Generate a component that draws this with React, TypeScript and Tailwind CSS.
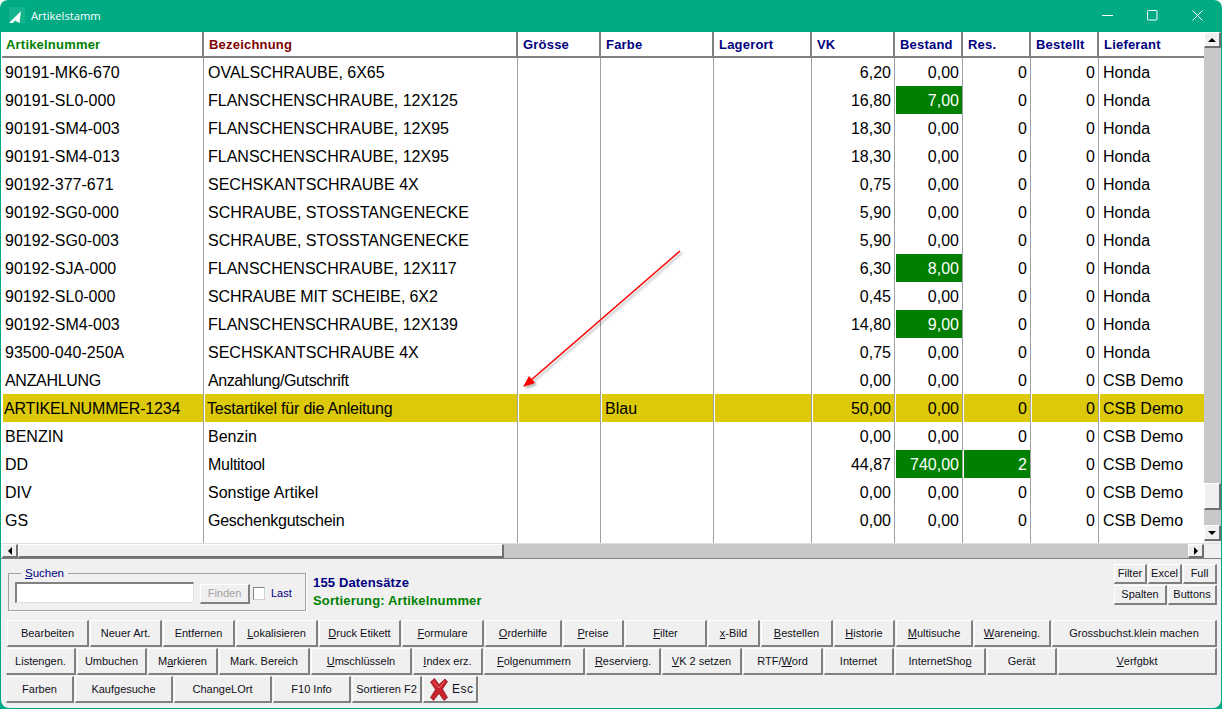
import React from "react";

const ff = "font-['Liberation_Sans',Arial,sans-serif]";

type Row = { a: string; b: string; c?: string; d?: string; vk: string; best: string; res: string; bestellt: string; lief: string; sel?: boolean; g1?: boolean; g2?: boolean; ta?: string; tb?: string };
const rows: Row[] = [
  { a: "90191-MK6-670", b: "OVALSCHRAUBE, 6X65", vk: "6,20", best: "0,00", res: "0", bestellt: "0", lief: "Honda" },
  { a: "90191-SL0-000", b: "FLANSCHENSCHRAUBE, 12X125", vk: "16,80", best: "7,00", res: "0", bestellt: "0", lief: "Honda", g1: true },
  { a: "90191-SM4-003", b: "FLANSCHENSCHRAUBE, 12X95", vk: "18,30", best: "0,00", res: "0", bestellt: "0", lief: "Honda" },
  { a: "90191-SM4-013", b: "FLANSCHENSCHRAUBE, 12X95", vk: "18,30", best: "0,00", res: "0", bestellt: "0", lief: "Honda" },
  { a: "90192-377-671", b: "SECHSKANTSCHRAUBE 4X", vk: "0,75", best: "0,00", res: "0", bestellt: "0", lief: "Honda" },
  { a: "90192-SG0-000", b: "SCHRAUBE, STOSSTANGENECKE", vk: "5,90", best: "0,00", res: "0", bestellt: "0", lief: "Honda" },
  { a: "90192-SG0-003", b: "SCHRAUBE, STOSSTANGENECKE", vk: "5,90", best: "0,00", res: "0", bestellt: "0", lief: "Honda" },
  { a: "90192-SJA-000", b: "FLANSCHENSCHRAUBE, 12X117", vk: "6,30", best: "8,00", res: "0", bestellt: "0", lief: "Honda", g1: true },
  { a: "90192-SL0-000", b: "SCHRAUBE MIT SCHEIBE, 6X2", vk: "0,45", best: "0,00", res: "0", bestellt: "0", lief: "Honda", tb: "tracking-[-0.12px]" },
  { a: "90192-SM4-003", b: "FLANSCHENSCHRAUBE, 12X139", vk: "14,80", best: "9,00", res: "0", bestellt: "0", lief: "Honda", g1: true },
  { a: "93500-040-250A", b: "SECHSKANTSCHRAUBE 4X", vk: "0,75", best: "0,00", res: "0", bestellt: "0", lief: "Honda" },
  { a: "ANZAHLUNG", b: "Anzahlung/Gutschrift", vk: "0,00", best: "0,00", res: "0", bestellt: "0", lief: "CSB Demo", ta: "tracking-[-0.3px]", tb: "tracking-[-0.4px]" },
  { a: "ARTIKELNUMMER-1234", b: "Testartikel für die Anleitung", d: "Blau", vk: "50,00", best: "0,00", res: "0", bestellt: "0", lief: "CSB Demo", sel: true, ta: "tracking-[-0.17px]", tb: "tracking-[-0.2px]" },
  { a: "BENZIN", b: "Benzin", vk: "0,00", best: "0,00", res: "0", bestellt: "0", lief: "CSB Demo" },
  { a: "DD", b: "Multitool", vk: "44,87", best: "740,00", res: "2", bestellt: "0", lief: "CSB Demo", g1: true, g2: true, tb: "tracking-[-0.3px]" },
  { a: "DIV", b: "Sonstige Artikel", vk: "0,00", best: "0,00", res: "0", bestellt: "0", lief: "CSB Demo" },
  { a: "GS", b: "Geschenkgutschein", vk: "0,00", best: "0,00", res: "0", bestellt: "0", lief: "CSB Demo", tb: "tracking-[-0.25px]" },
];

const headers: { t: string; w: string; c: string }[] = [
  { t: "Artikelnummer", w: "w-[202px] pl-1", c: "text-[#008000]" },
  { t: "Bezeichnung", w: "w-[314px] pl-[5px]", c: "text-[#800000]" },
  { t: "Grösse", w: "w-[83px] pl-[5px]", c: "text-[#000080]" },
  { t: "Farbe", w: "w-[113px] pl-[5px]", c: "text-[#000080]" },
  { t: "Lagerort", w: "w-[98px] pl-[5px]", c: "text-[#000080]" },
  { t: "VK", w: "w-[83px] pl-[5px]", c: "text-[#000080]" },
  { t: "Bestand", w: "w-[68px] pl-[5px]", c: "text-[#000080]" },
  { t: "Res.", w: "w-[68px] pl-[5px]", c: "text-[#000080]" },
  { t: "Bestellt", w: "w-[68px] pl-[5px]", c: "text-[#000080]" },
  { t: "Lieferant", w: "w-[105px] pl-[5px]", c: "text-[#000080]" },
];

function Cell({ w, right, pad, bg, color, children, last, track }: { w: string; right?: boolean; pad?: string; bg?: string; color?: string; children?: React.ReactNode; last?: boolean; track?: string }) {
  return (
    <div className={`${w} h-full shrink-0 pl-px ${last ? "" : "border-r border-[#a0a0a0]"}`}>
      <div className={`h-full flex items-center pt-0.5 whitespace-nowrap ${right ? "justify-end pr-[3px]" : pad ?? "pl-[3px]"} ${bg ?? ""} ${color ?? ""} ${track ?? ""}`}>{children}</div>
    </div>
  );
}

function GridRow({ r }: { r: Row }) {
  const bg = r.sel ? "bg-[#dcc90a]" : "";
  return (
    <div className="flex h-7 text-base text-black">
      <Cell w="w-[202px]" pad={r.sel ? "pl-px" : "pl-[2px]"} bg={bg} track={r.ta}>{r.a}</Cell>
      <Cell w="w-[314px]" pad={r.sel ? "pl-[2px]" : "pl-[3px]"} bg={bg} track={r.tb}>{r.b}</Cell>
      <Cell w="w-[83px]" bg={bg}>{r.c}</Cell>
      <Cell w="w-[113px]" bg={bg}>{r.d}</Cell>
      <Cell w="w-[98px]" bg={bg}></Cell>
      <Cell w="w-[83px]" right bg={bg}>{r.vk}</Cell>
      <Cell w="w-[68px]" right bg={r.g1 ? "bg-[#008000]" : bg} color={r.g1 ? "text-white" : ""}>{r.best}</Cell>
      <Cell w="w-[68px]" right bg={r.g2 ? "bg-[#008000]" : bg} color={r.g2 ? "text-white" : ""}>{r.res}</Cell>
      <Cell w="w-[68px]" right bg={bg}>{r.bestellt}</Cell>
      <Cell w="w-[105px]" bg={bg} last>{r.lief}</Cell>
    </div>
  );
}

const btnBase = "shrink-0 h-full flex items-center justify-center bg-[#f0f0f0] border-t border-l border-t-white border-l-white border-b-2 border-r-2 border-b-[#808080] border-r-[#808080] text-[11px] text-[#101020] whitespace-nowrap";

function Btn({ w, children }: { w: string; children: React.ReactNode }) {
  return <div className={`${btnBase} ${w}`}>{children}</div>;
}

const row1: [string, React.ReactNode][] = [
  ["w-[82px]", "Bearbeiten"],
  ["w-[72px]", "Neuer Art."],
  ["w-[72px]", "Entfernen"],
  ["w-[82px]", <><u>L</u>okalisieren</>],
  ["w-[82px]", <><u>D</u>ruck Etikett</>],
  ["w-[82px]", <><u>F</u>ormulare</>],
  ["w-[77px]", <><u>O</u>rderhilfe</>],
  ["w-[61px]", <><u>P</u>reise</>],
  ["w-[82px]", <><u>F</u>ilter</>],
  ["w-[52px]", <><u>x</u>-Bild</>],
  ["w-[72px]", <><u>B</u>estellen</>],
  ["w-[61px]", <><u>H</u>istorie</>],
  ["w-[77px]", <><u>M</u>ultisuche</>],
  ["w-[77px]", <><u>W</u>areneing.</>],
  ["w-[165px]", "Grossbuchst.klein machen"],
];
const row2: [string, React.ReactNode][] = [
  ["w-[70px]", <>Listen<u>g</u>en.</>],
  ["w-[70px]", "Umbuchen"],
  ["w-[70px]", <>M<u>a</u>rkieren</>],
  ["w-[91px]", "Mark. Bereich"],
  ["w-[101px]", <><u>U</u>mschlüsseln</>],
  ["w-[70px]", <><u>I</u>ndex erz.</>],
  ["w-[101px]", <><u>F</u>olgenummern</>],
  ["w-[75px]", <><u>R</u>eservierg.</>],
  ["w-[80px]", <><u>V</u>K 2 setzen</>],
  ["w-[80px]", <>RTF/<u>W</u>ord</>],
  ["w-[70px]", "Internet"],
  ["w-[91px]", <>InternetSho<u>p</u></>],
  ["w-[70px]", "Gerät"],
  ["w-[159px]", <><u>V</u>erfgbkt</>],
];
const row3: [string, React.ReactNode][] = [
  ["w-[68px]", "Farben"],
  ["w-[98px]", "Kaufgesuche"],
  ["w-[98px]", "ChangeLOrt"],
  ["w-[78px]", "F10 Info"],
  ["w-[70px]", "Sortieren F2"],
];

function Tri({ d }: { d: "u" | "d" | "l" | "r" }) {
  const pts = { u: "0,4 8,4 4,0", d: "0,0 8,0 4,4", l: "4,0 4,8 0,4", r: "0,0 0,8 4,4" }[d];
  const s = d === "u" || d === "d" ? "w-2 h-1" : "w-1 h-2";
  return <svg viewBox={d === "u" || d === "d" ? "0 0 8 4" : "0 0 4 8"} className={s}><polygon points={pts} fill="#000" /></svg>;
}

const sbBtn = "flex items-center justify-center bg-[#f0f0f0] border-t border-l border-white border-b-2 border-r-2 border-b-[#707070] border-r-[#707070] shrink-0";

export default function App() {
  return (
    <div className={`${ff} relative w-[1222px] h-[709px] bg-[#00ab84] rounded-t-lg overflow-hidden`}>
      {/* title bar */}
      <div className="h-8 flex items-center pl-[9px] text-white">
        <div className="w-4 h-4 mr-[6px] flex items-end bg-[#14b28d] -translate-y-px">
          <svg viewBox="0 0 12 12" className="w-3 h-3"><path d="M0 12 L12 0 L10.5 12 L6 9.5 L3.5 12 Z" fill="#fff" /></svg>
        </div>
        <span className="text-[11.2px] font-['Open_Sans',sans-serif]">Artikelstamm</span>
        <div className="ml-auto mr-[2px] flex items-center h-[30px] self-start">
          <div className="w-[45px] h-full flex items-center justify-center"><svg viewBox="0 0 11 11" className="w-[11px] h-[11px]"><path d="M0 5.5 H11" stroke="#fff" strokeWidth="1" /></svg></div>
          <div className="w-[45px] h-full flex items-center justify-center"><svg viewBox="0 0 11 11" className="w-[11px] h-[11px]"><rect x="0.5" y="0.5" width="9.5" height="9.5" rx="1" fill="none" stroke="#fff" strokeWidth="1" /></svg></div>
          <div className="w-[45px] h-full flex items-center justify-center"><svg viewBox="0 0 11 11" className="w-[11px] h-[11px]"><path d="M0.5 0.5 L10.5 10.5 M10.5 0.5 L0.5 10.5" stroke="#fff" strokeWidth="1" /></svg></div>
        </div>
      </div>

      {/* client */}
      <div className="ml-px mr-px h-[676px] bg-[#f0f0f0] rounded-b-lg overflow-hidden flex flex-col">
        {/* grid + v scrollbar */}
        <div className="flex h-[511px] shrink-0 pl-px bg-white">
          <div className="w-[1202px] shrink-0 bg-white flex flex-col">
            <div className="flex h-[26px] shrink-0 border-b-2 border-[#808080] bg-white">
              {headers.map((h, i) => (
                <div key={h.t} className={`${h.w} shrink-0 h-full flex items-center pt-0.5 font-bold text-[13px] tracking-[0.2px] ${h.c} ${i < 9 ? "border-r-2 border-[#808080]" : ""}`}>{h.t}</div>
              ))}
            </div>
            {rows.map((r) => <GridRow key={r.a} r={r} />)}
            <div className="flex-1 flex">
              {headers.map((h, i) => (
                <div key={h.t} className={`${h.w} shrink-0 ${i < 9 ? "border-r border-[#a0a0a0]" : ""}`} />
              ))}
            </div>
          </div>
          <div className="w-[17px] shrink-0 flex flex-col bg-[#c8c8c8]">
            <div className={`${sbBtn} h-4`}><Tri d="u" /></div>
            <div className="h-[435px] shrink-0 bg-[#c8c8c8]" />
            <div className={`${sbBtn} h-[27px]`} />
            <div className="h-[15px] shrink-0 bg-[#c8c8c8]" />
            <div className={`${sbBtn} h-4`}><Tri d="d" /></div>
            <div className="flex-1 bg-[#f0f0f0]" />
          </div>
        </div>
        {/* h scrollbar */}
        <div className="flex h-[16px] shrink-0 pl-px border-b border-[#808080] border-t border-t-[#e0e0e0]">
          <div className={`${sbBtn} w-[16px] h-full`}><Tri d="l" /></div>
          <div className={`${sbBtn} w-[486px] h-full`} />
          <div className="flex-1 bg-[#c8c8c8]" />
          <div className={`${sbBtn} w-[16px] h-full mr-[17px]`}><Tri d="r" /></div>
        </div>

        {/* info panel */}
        <div className="flex h-[61px] shrink-0 pl-px">
          <fieldset className="ml-[6px] mt-[8px] w-[298px] h-[44px] border border-[#a0a0a0] shadow-[1px_1px_0_#fff] flex items-center pl-[6px] pb-[3px]">
            <legend className="ml-[6px] px-[4px] text-[11.5px] leading-[13px] text-[#000080]"><u>S</u>uchen</legend>
            <div className="w-[179px] h-[21px] -translate-y-px bg-white border-t-2 border-l-2 border-t-[#808080] border-l-[#808080] border-b border-r border-b-[#e0e0e0] border-r-[#e0e0e0]" />
            <div className="ml-[6px] w-[50px] h-[20px] flex items-center justify-center bg-[#f0f0f0] border-t border-l border-white border-b-2 border-r-2 border-b-[#808080] border-r-[#808080] text-[11px] text-[#a0a0a0]">Finden</div>
            <div className="ml-[3px] w-[12px] h-[13px] bg-white border-t border-l border-t-[#808080] border-l-[#808080] border-b border-r border-b-[#d0d0d0] border-r-[#d0d0d0]" />
            <span className="ml-[6px] text-[11px] text-[#000080]">Last</span>
          </fieldset>
          <div className="ml-[7px] pt-[15px] font-bold text-[13px] leading-[18px] tracking-[0.15px]">
            <div className="text-[#000080]">155 Datensätze</div>
            <div className="text-[#008000]">Sortierung: Artikelnummer</div>
          </div>
          <div className="ml-auto mr-[4px] pt-[5px] w-[103px] flex flex-col gap-px">
            <div className="flex h-[20px] gap-px">
              <Btn w="w-[33px]">Filter</Btn>
              <Btn w="w-[34px]">Excel</Btn>
              <Btn w="w-[34px]">Full</Btn>
            </div>
            <div className="flex h-[20px] gap-px">
              <Btn w="w-[53px]">Spalten</Btn>
              <Btn w="w-[49px]">Buttons</Btn>
            </div>
          </div>
        </div>

        {/* button rows */}
        <div className="flex flex-col gap-px pl-[5px]">
          <div className="flex h-[27px] gap-px pl-px">{row1.map(([w, c], i) => <Btn key={i} w={w}>{c}</Btn>)}</div>
          <div className="flex h-[27px] gap-px">{row2.map(([w, c], i) => <Btn key={i} w={w}>{c}</Btn>)}</div>
          <div className="flex h-[27px] gap-px">
            {row3.map(([w, c], i) => <Btn key={i} w={w}>{c}</Btn>)}
            <div className={`${btnBase} w-[55px] justify-start pl-[6px] gap-[4px]`}>
              <svg viewBox="0 0 18 23" className="w-[18px] h-[23px]">
                <path d="M0.5 4 L4.5 0.5 L9 6.5 L15 1 L17.5 3.5 L12.5 11 L17.5 19.5 L14 22.5 L9 15.5 L3.5 22.5 L0.5 19.5 L5.5 11.5 Z" fill="#c8232c" stroke="#8a1018" strokeWidth="0.7" />
                <path d="M3 3.5 L9 10 L14.5 3.5" fill="none" stroke="#e9676d" strokeWidth="1" />
              </svg>
              <span className="tracking-[0.5px] text-[12px]">Esc</span>
            </div>
          </div>
        </div>
      </div>

      {/* annotation arrow drawn over the grid */}
      <svg className="absolute left-0 top-0 pointer-events-none drop-shadow-[2px_2px_1px_rgba(0,0,0,0.3)]" width="1222" height="709" viewBox="0 0 1222 709">
        <line x1="680" y1="251" x2="530" y2="381" stroke="#ff0000" strokeWidth="1.6" />
        <polygon points="523,387 529,376 535,383" fill="#ff0000" />
      </svg>
    </div>
  );
}
